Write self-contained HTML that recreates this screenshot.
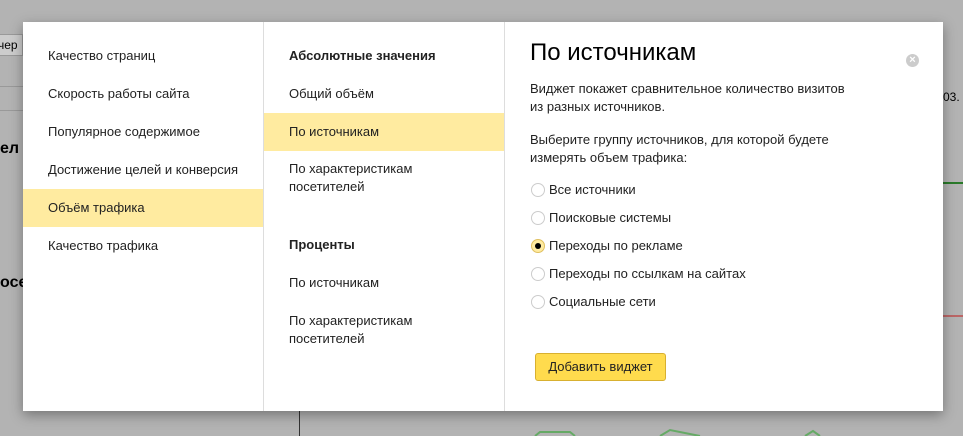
<!DOCTYPE html>
<html><head><meta charset="utf-8"><style>
*{margin:0;padding:0;box-sizing:border-box}
body{width:963px;height:436px;background:#b3b3b3;font-family:"Liberation Sans",Arial,sans-serif;font-size:13px;color:#222;position:relative;overflow:hidden}
.bg{position:absolute;color:#000}
.modal{position:absolute;left:23px;top:22px;width:920px;height:389px;background:#fff;box-shadow:0 4px 12px rgba(0,0,0,.35)}
.col1{position:absolute;left:0;top:0;width:241px;height:100%;border-right:1px solid #ddd}
.col2{position:absolute;left:241px;top:0;width:241px;height:100%;border-right:1px solid #ddd}
.it{position:absolute;left:0;right:0;height:38px;line-height:38px;padding-left:25px}
.sel{background:#ffeba0}
.c2 .it{padding-left:25px}
.two{line-height:18px;padding-top:2px}
.b{font-weight:bold}
.r{position:absolute;left:507px;top:0}
.radio{position:absolute;left:508px;width:14px;height:14px;border:1px solid #ccc;border-radius:50%;background:#fff}
.rl{position:absolute;left:526px}
</style></head><body>
<div class="bg" style="left:-2px;top:34px;width:25px;height:22px;border:1px solid #999;border-left:none;background:#ccc;font-size:12px;line-height:20px">чер</div>
<div class="bg" style="left:0;top:140px;font-size:16px;font-weight:bold">ел</div>
<div class="bg" style="left:0;top:274px;font-size:16px;font-weight:bold">осе</div>
<div class="bg" style="left:943px;top:90px;font-size:12px">03.</div>
<div style="position:absolute;left:0;top:86px;width:23px;height:1px;background:#999"></div>
<div style="position:absolute;left:0;top:110px;width:23px;height:1px;background:#999"></div>
<div style="position:absolute;left:943px;top:182px;width:20px;height:2px;background:#2a7a2a"></div>
<div style="position:absolute;left:943px;top:315px;width:20px;height:2px;background:#b66"></div>
<div style="position:absolute;left:299px;top:411px;width:1px;height:25px;background:#333"></div>
<svg style="position:absolute;left:530px;top:424px" width="300" height="12"><polyline points="5,12 10,8 40,8 45,12" fill="none" stroke="#6a6" stroke-width="2"/><polyline points="130,12 140,6 170,12" fill="none" stroke="#6a6" stroke-width="2"/><polyline points="275,12 283,7 290,12" fill="none" stroke="#6a6" stroke-width="2"/></svg>
<div class="modal">
 <div class="col1">
  <div class="it" style="top:15px">Качество страниц</div>
  <div class="it" style="top:53px">Скорость работы сайта</div>
  <div class="it" style="top:91px">Популярное содержимое</div>
  <div class="it" style="top:129px">Достижение целей и конверсия</div>
  <div class="it sel" style="top:167px">Объём трафика</div>
  <div class="it" style="top:205px">Качество трафика</div>
 </div>
 <div class="col2 c2">
  <div class="it b" style="top:15px">Абсолютные значения</div>
  <div class="it" style="top:53px">Общий объём</div>
  <div class="it sel" style="top:91px">По источникам</div>
  <div class="it two" style="top:136px;height:40px">По характеристикам<br>посетителей</div>
  <div class="it b" style="top:204px">Проценты</div>
  <div class="it" style="top:242px">По источникам</div>
  <div class="it two" style="top:288px;height:40px">По характеристикам<br>посетителей</div>
 </div>
 <div class="r" style="top:17px;font-size:24px;color:#000">По источникам</div>
 <div style="position:absolute;left:883px;top:32px;width:13px;height:13px;border-radius:50%;background:#ccc;color:#fff;font-size:11px;line-height:13px;text-align:center;font-weight:bold">×</div>
 <div class="r" style="top:58px;line-height:18px">Виджет покажет сравнительное количество визитов<br>из разных источников.</div>
 <div class="r" style="top:109px;line-height:18px">Выберите группу источников, для которой будете<br>измерять объем трафика:</div>
 <div class="radio" style="top:161px"></div><div class="rl" style="top:160px">Все источники</div>
 <div class="radio" style="top:189px"></div><div class="rl" style="top:188px">Поисковые системы</div>
 <div class="radio" style="top:217px;background:#ffeba0;border-color:#e0c060"><div style="position:absolute;left:3px;top:3px;width:6px;height:6px;border-radius:50%;background:#000"></div></div><div class="rl" style="top:216px">Переходы по рекламе</div>
 <div class="radio" style="top:245px"></div><div class="rl" style="top:244px">Переходы по ссылкам на сайтах</div>
 <div class="radio" style="top:273px"></div><div class="rl" style="top:272px">Социальные сети</div>
 <div style="position:absolute;left:512px;top:331px;width:131px;height:28px;background:#ffdb4d;border:1px solid #d8b030;border-radius:3px;line-height:26px;text-align:center;color:#222">Добавить виджет</div>
</div>
</body></html>
